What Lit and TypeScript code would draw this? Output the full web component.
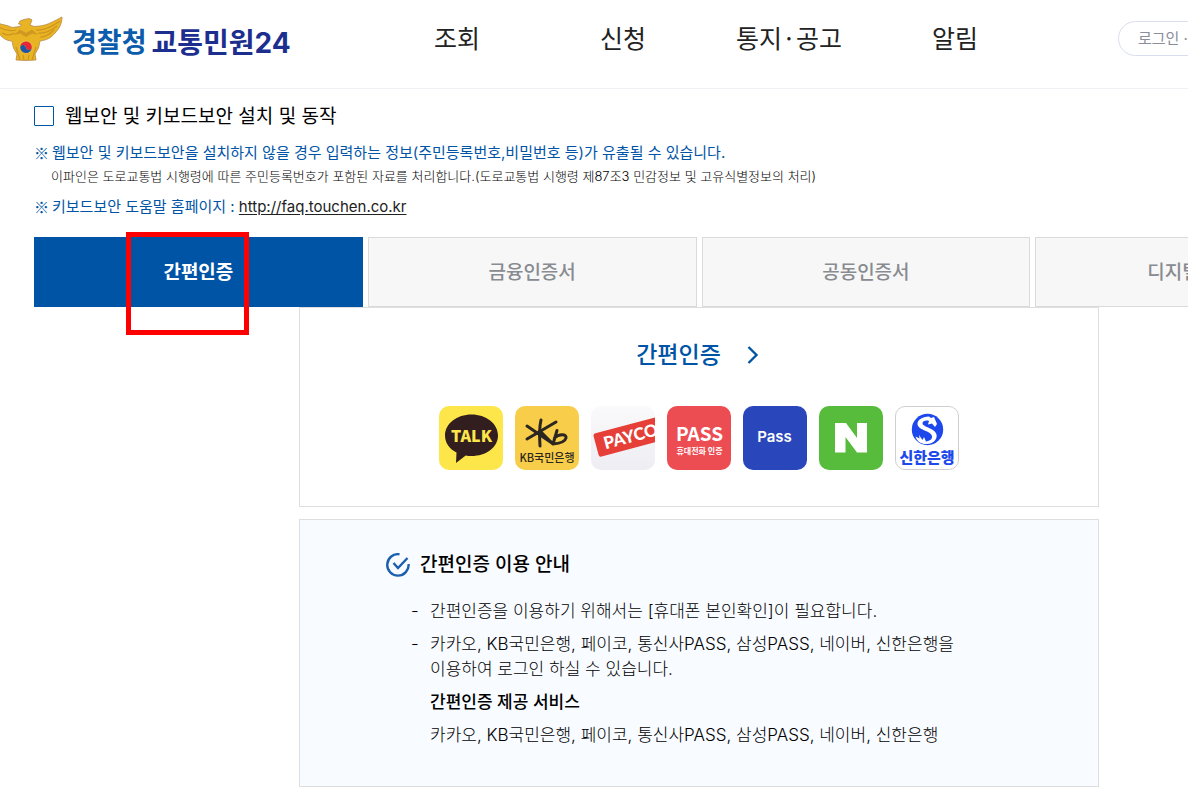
import { LitElement, html, css, svg } from "lit";
import { customElement, state } from "lit/decorators.js";

const emblem = svg`
  <svg class="emblem" viewBox="0 0 64 46" aria-hidden="true">
    <path d="M-2 6C2 8 8 8 12 10.500L20 9.500 21.500 7.500 18.500 7 20 4 24 2.500 29.500 1.500 32 3 30 8 34 9.500 40 9C48 8 54 4 62 0C62 7 59 12 55 16C51 21 47 23 40 24L38.500 31 35 37 36 43 26 43.500 16 43 17 37 13.500 31 12 24C6 24 1 20 -2 15Z" fill="#e8b424" stroke="#b98a4a" stroke-width=".8"/>
    <path d="M-1 10C5 14 11 14 16 13M2 16C7 19 11 18 15 16M36 13C44 14 53 9 60 4M38 16C45 17 52 13 57 9M40 20C45 20 50 17 54 13M16 30L20 43M36 30L32 43M23 38L24 43M29 38L28 43" fill="none" stroke="#cf9420" stroke-width="1.200"/>
    <path d="M14 18L20 12.500 26 16 32 12.500 38 18 32 16.500 26 20 20 16.500Z" fill="#cf9820"/>
    <circle cx="26" cy="30" r="7" fill="#e9b93a"/>
    <path d="M20.200 30A5.800 5.800 0 0 1 31.800 30.500A3 3 0 0 1 26 31A3 3 0 0 0 20.200 30Z" fill="#e8263a"/>
    <path d="M20.200 30A5.800 5.800 0 0 0 31.800 30.500A3 3 0 0 1 26 31A3 3 0 0 0 20.200 30Z" fill="#1f55a5"/>
  </svg>`;

const kakao = svg`
  <rect width="64" height="64" rx="10" fill="#fde64a"/>
  <path d="M32.500 8.500C47 8.500 59 17.500 59 29.500S47 50 32.500 50C30.500 50 28.500 49.900 26.700 49.500L17 57L17.500 46.500C10.500 43 6 37 6 29.500C6 17.500 18 8.500 32.500 8.500Z" fill="#321e1e"/>
  <text x="32.500" y="36" class="talk">TALK</text>`;

const kb = svg`
  <rect width="64" height="64" rx="10" fill="#f8cd4a"/>
  <g fill="none" stroke="#2b2620" stroke-width="3" stroke-linecap="round" stroke-linejoin="round">
    <path d="M26 14C24 22 24.500 32 25 40"/><path d="M12 20L31 33L37 37"/><path d="M12 33L41 16"/>
    <path d="M25 25L38 38L42 24.500M39.500 32C44 27.500 52 28 51 32C50 36 44 37.500 38 38"/>
  </g>
  <text x="32" y="56" class="kb">KB국민은행</text>`;

const payco = svg`
  <defs><linearGradient id="g" x2="0" y2="1"><stop stop-color="#fafafb"/><stop offset="1" stop-color="#ededf3"/></linearGradient>
  <clipPath id="c"><rect width="64" height="64" rx="10"/></clipPath></defs>
  <g clip-path="url(#c)"><rect width="64" height="64" fill="url(#g)"/>
  <g transform="rotate(-15 2 28)"><rect x="2" y="28" width="80" height="24" rx="2.500" fill="#e53f38"/>
  <text x="10" y="46" class="payco">PAYCO</text></g></g>`;

const pass = svg`
  <rect width="64" height="64" rx="10" fill="#ec4d53"/>
  <text x="32.500" y="35" class="pass">PASS</text>
  <text x="32.500" y="48" class="sub">휴대전화 인증</text>`;

const samsung = svg`
  <rect width="64" height="64" rx="10" fill="#2947bb"/>
  <text x="31.500" y="36" class="samsung">Pass</text>`;

const naver = svg`
  <rect width="64" height="64" rx="10" fill="#57bc3c"/>
  <path d="M16 17H27L38 32V17H48V46.500H38L26.500 31V46.500H16Z" fill="#fff"/>`;

const shinhan = svg`
  <rect x=".5" y=".5" width="63" height="63" rx="9.500" fill="#fff" stroke="#cfcfcf"/>
  <circle cx="32.500" cy="23.500" r="15.700" fill="#1d48ec"/>
  <path d="M39 11L36 12 34 10.500C27 11 22 14 22.500 18.500C23 24 36 25 37 30C37.500 33 35 35 31 35.500L29 31 27.500 34 24 29 24.500 32.500 20.500 30.500C22 36 27 38.500 32 38C39 37.500 42.500 33 41.500 28.500C40 22 27 21 27.500 17C28 14.500 32 14 34 15L33 18.500 37 17.500 40 21 42 18Z" fill="#fff"/>
  <text x="32" y="57" class="shinhan">신한은행</text>`;

const providers = [
  { name: "카카오", art: kakao },
  { name: "KB국민은행", art: kb },
  { name: "페이코", art: payco },
  { name: "통신사PASS", art: pass },
  { name: "삼성PASS", art: samsung },
  { name: "네이버", art: naver },
  { name: "신한은행", art: shinhan },
];

const menu = ["조회", "신청", "통지·공고", "알림"];
const tabs = ["간편인증", "금융인증서", "공동인증서", "디지털원패스"];

@customElement("app-root")
export class AppRoot extends LitElement {
  @state() private active = 0;

  static styles = css`
    :host {
      display: block;
      overflow: hidden;
      background: #fff;
      color: #000;
      font-family: Inter, "Noto Sans CJK KR", sans-serif;
      word-break: keep-all;
    }
    * { box-sizing: border-box; }
    a { color: inherit; text-decoration: none; }
    button { font: inherit; cursor: pointer; }
    p, h1, h2, h3, ul { margin: 0; padding: 0; font-weight: inherit; }
    ul { list-style: none; }

    header {
      display: grid;
      grid-template-columns: 374px 744px auto;
      align-items: center;
      height: 89px;
      padding-bottom: 12px;
      border-bottom: 1px solid #eef0f4;
      white-space: nowrap;
    }
    .logo { display: flex; align-items: center; padding-top: 3px; font-size: 28px; line-height: 40px; font-weight: 700; color: #1c2f8f; }
    .emblem { width: 64px; height: 46px; margin-right: 8px; flex: none; overflow: visible; }
    .name { display: flex; gap: 5px; padding-top: 6px; }
    .agency { font-size: 27px; color: #0b5cab; }
    nav { display: flex; padding-bottom: 2px; font-family: "Noto Sans CJK KR", sans-serif; }
    nav a { width: 166px; text-align: center; font-size: 25px; line-height: 36px; color: #222; }
    .login {
      height: 35px;
      width: 280px;
      padding: 2px 19px 0;
      border: 1px solid #dadded;
      border-radius: 18px;
      background: #fff;
      color: #8a8d9a;
      font-size: 15px;
      line-height: 24px;
      text-align: left;
    }

    main { min-width: 1330px; margin: 0 34px; }
    .security { padding: 12px 0 18px; color: #0054a6; }
    .check { display: flex; align-items: center; gap: 11px; height: 30px; margin-bottom: 10px; font-size: 19px; line-height: 30px; color: #000; }
    .check span { padding-top: 2px; }
    .check input { appearance: none; width: 20px; height: 20px; margin: 0; border: 1px solid #0054a6; border-radius: 1px; background: #fff; }
    .check input:checked { background: #0054a6; box-shadow: inset 0 0 0 3px #fff; }
    .note { display: flex; gap: 3px; font-size: 15px; line-height: 24px; }
    .star { font-family: "Noto Sans CJK KR", sans-serif; }
    .small { margin: 0 0 8px 17px; font-size: 13px; line-height: 22px; font-weight: 300; color: #000; }
    .note a { color: #222; text-decoration: underline; text-underline-offset: 2px; }

    .tabs { display: grid; grid-template-columns: repeat(4, 1fr); gap: 5px; }
    .tab {
      position: relative;
      height: 70px;
      padding: 2px 0 0;
      border: 1px solid #dadada;
      background: #f7f7f7;
      color: #888b90;
      font-size: 19px;
      line-height: 28px;
      font-weight: 500;
    }
    .tab.on { border-color: #0054a6; background: #0054a6; color: #fff; font-weight: 700; }
    .mark { position: absolute; left: 91px; top: -6px; width: 123px; height: 103px; border: 5px solid #f00; pointer-events: none; }

    .panel { max-width: 800px; margin: 0 auto; border: 1px solid #dedede; }
    .auth { padding: 30px 0 36px; }
    .title { display: flex; justify-content: center; align-items: center; gap: 26px; padding-right: 3px; margin-bottom: 34px; font-size: 23px; line-height: 34px; font-weight: 500; color: #0054a6; }
    .arrow { width: 12px; height: 20px; }
    .providers { display: flex; justify-content: center; gap: 12px; }
    .provider { display: block; width: 64px; height: 64px; padding: 0; border: 0; background: none; }
    .provider svg { display: block; width: 64px; height: 64px; }
    text { text-anchor: middle; font-weight: 700; fill: #fff; }
    .talk { font: 900 16px "Noto Sans CJK KR", sans-serif; fill: #fde64a; }
    .kb { font: 500 11px "Noto Sans CJK KR", sans-serif; fill: #2b2620; }
    .payco { font: 900 17px Lato, sans-serif; text-anchor: start; }
    .pass { font: 700 19px "Noto Sans CJK KR", sans-serif; }
    .sub { font-size: 8px; font-weight: 700; }
    .samsung { font: 600 15px Inter, sans-serif; }
    .shinhan { font-size: 15px; font-weight: 900; fill: #1d48ec; }

    .guide { margin-top: 12px; padding: 32px 86px 38px; background: #f8fbff; }
    .guide h3 { display: flex; align-items: center; gap: 10px; margin-bottom: 21px; font-size: 19px; line-height: 26px; font-weight: 500; }
    .tick { width: 24px; height: 24px; }
    .lines { display: grid; gap: 8px; padding-left: 25px; font-size: 17px; line-height: 25px; font-weight: 300; }
    .lines li { display: flex; }
    .dash { flex: none; width: 19px; }
    .plain { padding-left: 19px; }
    .strong { font-weight: 500; }
  `;

  render() {
    return html`
      <header>
        <a class="logo" href="#">${emblem}<span class="name"><span class="agency">경찰청</span><span>교통민원24</span></span></a>
        <nav>${menu.map((m) => html`<a href="#">${m}</a>`)}</nav>
        <button class="login">로그인&nbsp;·</button>
      </header>
      <main>
        <section class="security">
          <label class="check"><input type="checkbox" /><span>웹보안 및 키보드보안 설치 및 동작</span></label>
          <p class="note"><span class="star">※</span><span>웹보안 및 키보드보안을 설치하지 않을 경우 입력하는 정보(주민등록번호,비밀번호 등)가 유출될 수 있습니다.</span></p>
          <p class="small">이파인은 도로교통법 시행령에 따른 주민등록번호가 포함된 자료를 처리합니다.(도로교통법 시행령 제87조3 민감정보 및 고유식별정보의 처리)</p>
          <p class="note"><span class="star">※</span><span>키보드보안 도움말 홈페이지 : <a href="http://faq.touchen.co.kr">http://faq.touchen.co.kr</a></span></p>
        </section>
        <div class="tabs">
          ${tabs.map((t, i) => html`
            <button class="tab ${i === this.active ? "on" : ""}" @click=${() => (this.active = i)}>
              ${t}${i === 0 ? html`<span class="mark"></span>` : ""}
            </button>`)}
        </div>
        <section class="panel auth">
          <h2><a class="title" href="#">간편인증
            <svg class="arrow" viewBox="0 0 12 20" aria-hidden="true"><path d="M1.500 2L9.500 10L1.500 18" fill="none" stroke="#0054a6" stroke-width="2.400"/></svg></a></h2>
          <div class="providers">
            ${providers.map((p) => html`<button class="provider" aria-label=${p.name}><svg viewBox="0 0 64 64">${p.art}</svg></button>`)}
          </div>
        </section>
        <section class="panel guide">
          <h3><svg class="tick" viewBox="0 0 24 24" fill="none" stroke="#1b5faf" stroke-width="2.400" aria-hidden="true"><path d="M13.500 1.300A10.700 10.700 0 1 0 22.600 11"/><path d="M7.500 10L12 15L21.500 5"/></svg>간편인증 이용 안내</h3>
          <ul class="lines">
            <li><span class="dash">-</span><span>간편인증을 이용하기 위해서는 [휴대폰 본인확인]이 필요합니다.</span></li>
            <li><span class="dash">-</span><span>카카오, KB국민은행, 페이코, 통신사PASS, 삼성PASS, 네이버, 신한은행을 이용하여 로그인 하실 수 있습니다.</span></li>
            <li class="plain strong">간편인증 제공 서비스</li>
            <li class="plain">카카오, KB국민은행, 페이코, 통신사PASS, 삼성PASS, 네이버, 신한은행</li>
          </ul>
        </section>
      </main>
    `;
  }
}
